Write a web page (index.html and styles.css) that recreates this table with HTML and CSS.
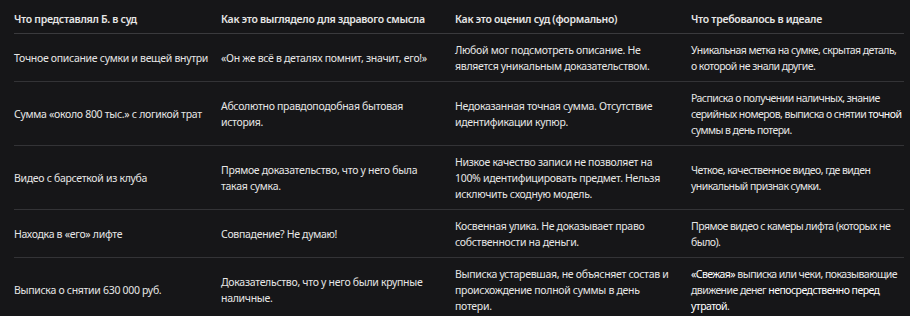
FILE: index.html
```html
<!DOCTYPE html>
<html lang="ru">
<head>
<meta charset="utf-8">
<link rel="stylesheet" href="styles.css">
</head>
<body>
<table class="grid">
  <colgroup>
    <col class="c1"><col class="c2"><col class="c3"><col class="c4">
  </colgroup>
  <thead>
    <tr>
      <th>Что представлял Б. в суд</th>
      <th>Как это выглядело для здравого смысла</th>
      <th>Как это оценил суд (формально)</th>
      <th>Что требовалось в идеале</th>
    </tr>
  </thead>
  <tbody>
    <tr>
      <td>Точное описание сумки и вещей внутри</td>
      <td>«Он же всё в деталях помнит, значит, его!»</td>
      <td>Любой мог подсмотреть описание. Не является уникальным доказательством.</td>
      <td>Уникальная метка на сумке, скрытая деталь, о которой не знали другие.</td>
    </tr>
    <tr>
      <td>Сумма «около 800 тыс.» с логикой трат</td>
      <td>Абсолютно правдоподобная бытовая история.</td>
      <td>Недоказанная точная сумма. Отсутствие идентификации купюр.</td>
      <td>Расписка о получении наличных, знание серийных номеров, выписка о снятии <b>точной</b> суммы в день потери.</td>
    </tr>
    <tr>
      <td>Видео с барсеткой из клуба</td>
      <td>Прямое доказательство, что у него была такая сумка.</td>
      <td>Низкое качество записи не позволяет на 100% идентифицировать предмет. Нельзя исключить сходную модель.</td>
      <td>Четкое, качественное видео, где виден уникальный признак сумки.</td>
    </tr>
    <tr>
      <td>Находка в «его» лифте</td>
      <td>Совпадение? Не думаю!</td>
      <td>Косвенная улика. Не доказывает право собственности на деньги.</td>
      <td>Прямое видео с камеры лифта (которых не было).</td>
    </tr>
    <tr>
      <td>Выписка о снятии 630 000 руб.</td>
      <td>Доказательство, что у него были крупные наличные.</td>
      <td>Выписка устаревшая, не объясняет состав и происхождение полной суммы в день потери.</td>
      <td><b>«Свежая»</b> выписка или чеки, показывающие движение денег <b>непосредственно перед утратой</b>.</td>
    </tr>
  </tbody>
</table>
</body>
</html>
```

FILE: styles.css
```css
html, body {
  margin: 0;
  background: #161618;
}
body {
  padding: 3px 6px 0 14px;
  font-family: "Noto Sans", "Open Sans", sans-serif;
  font-size: 10.5px;
  letter-spacing: -0.3px;
  line-height: 16px;
  color: #e6e6e6;
}
.grid {
  width: 890px;
  border-collapse: collapse;
  table-layout: fixed;
}
.c1 { width: 207px; }
.c2 { width: 234px; }
.c3 { width: 236px; }
.c4 { width: 213px; }
.grid th {
  text-align: left;
  font-weight: 600;
  padding: 8px 16px 6px 0;
  border-bottom: 1px solid #3a3a3d;
  vertical-align: bottom;
}
.grid td {
  padding: 7.5px 18px 7.5px 0;
  vertical-align: middle;
  border-bottom: 1px solid #333336;
}
.grid td:first-child {
  padding-right: 4px;
}
.grid th:last-child,
.grid td:last-child {
  padding-right: 0;
}
.grid td:last-child {
  letter-spacing: -0.55px;
}
.grid b {
  font-weight: 400;
  color: #ffffff;
}
```
